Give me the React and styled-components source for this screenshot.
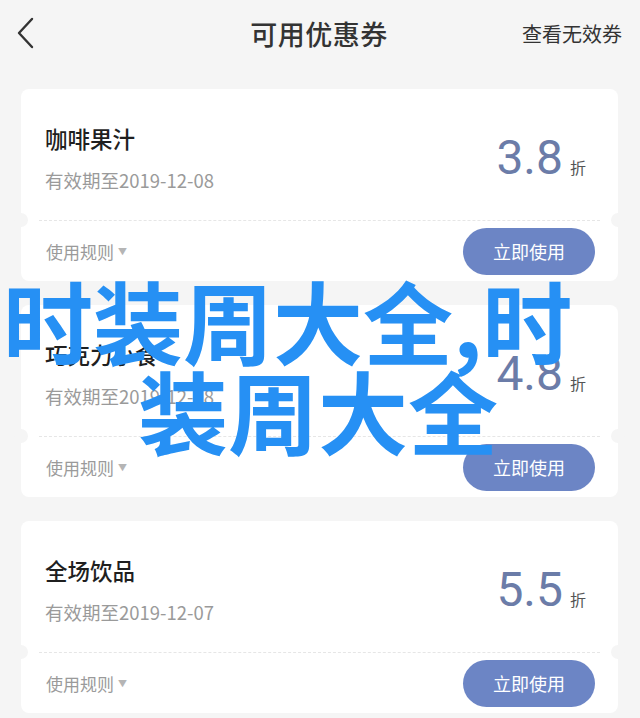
import React from 'react';
import styled, { createGlobalStyle } from 'styled-components';

const coupons = [
  { title: '咖啡果汁', date: '2019-12-08', rate: '3.8' },
  { title: '巧克力小食', date: '2019-12-08', rate: '4.8' },
  { title: '全场饮品', date: '2019-12-07', rate: '5.5' },
];

export default function App() {
  return (
    <Page>
      <GlobalStyle />
      <Header>
        <BackButton aria-label="返回">
          <svg width="20" height="32" viewBox="0 0 20 32">
            <path d="M16 2 L3 16 L16 30" fill="none" stroke="#333" strokeWidth="2.4" strokeLinecap="round" strokeLinejoin="round" />
          </svg>
        </BackButton>
        <Title>可用优惠券</Title>
        <HeaderLink>查看无效券</HeaderLink>
      </Header>

      <List>
        {coupons.map((c) => (
          <Card key={c.title}>
            <CardTop>
              <div>
                <CouponName>{c.title}</CouponName>
                <Expire>有效期至{c.date}</Expire>
              </div>
              <Discount>
                <Rate>{c.rate}</Rate>
                <Unit>折</Unit>
              </Discount>
            </CardTop>
            <Divider />
            <CardBottom>
              <Rules>
                使用规则 <Caret>▼</Caret>
              </Rules>
              <UseButton>立即使用</UseButton>
            </CardBottom>
          </Card>
        ))}
      </List>

      <Watermark>
        <span>时装周大全,时</span>
        <WatermarkLine>装周大全</WatermarkLine>
      </Watermark>
    </Page>
  );
}

const GlobalStyle = createGlobalStyle`
  html, body {
    margin: 0;
    padding: 0;
    background: #f5f5f5;
  }
  body {
    font-family: "Noto Sans CJK SC", "Noto Sans", sans-serif;
  }
`;

const Page = styled.div`
  position: relative;
  width: 640px;
  height: 718px;
  overflow: hidden;
  background: #f5f5f5;
`;

const Header = styled.div`
  height: 66px;
  display: grid;
  grid-template-columns: 1fr auto 1fr;
  align-items: center;
  padding: 0 18px 0 16px;
  box-sizing: border-box;
`;

const BackButton = styled.div`
  display: flex;
  align-items: center;
  height: 32px;
`;

const Title = styled.div`
  font-size: 27px;
  font-weight: 500;
  color: #333;
  letter-spacing: 0.5px;
`;

const HeaderLink = styled.div`
  justify-self: end;
  font-size: 20px;
  color: #333;
`;

const List = styled.div`
  display: flex;
  flex-direction: column;
  gap: 24px;
  padding: 23px 22px 0 21px;
`;

const Card = styled.div`
  position: relative;
  background: #fff;
  border-radius: 8px;
`;

const CardTop = styled.div`
  display: flex;
  justify-content: space-between;
  align-items: center;
  padding: 34px 32px 28px 24px;
`;

const CouponName = styled.div`
  font-size: 22.5px;
  line-height: 30px;
  font-weight: 500;
  color: #1f1f1f;
`;

const Expire = styled.div`
  margin-top: 15px;
  font-size: 18.5px;
  line-height: 24px;
  color: #9a9a9a;
`;

const Discount = styled.div`
  display: flex;
  align-items: baseline;
`;

const Rate = styled.span`
  font-family: Roboto, "Liberation Sans", sans-serif;
  font-size: 48px;
  line-height: 1;
  color: #6b7ca8;
`;

const Unit = styled.span`
  margin-left: 7px;
  font-size: 16px;
  color: #555;
`;

const Divider = styled.div`
  position: relative;
  margin: 0 18px;
  border-top: 1.5px dashed #e6e6e6;

  &::before,
  &::after {
    content: '';
    position: absolute;
    top: -8px;
    width: 14px;
    height: 14px;
    border-radius: 50%;
    background: #f5f5f5;
  }
  &::before {
    left: -25px;
  }
  &::after {
    right: -25px;
  }
`;

const CardBottom = styled.div`
  height: 60px;
  display: flex;
  justify-content: space-between;
  align-items: center;
  padding: 0 23px 0 25px;
`;

const Rules = styled.div`
  font-size: 17px;
  color: #9a9a9a;
  display: flex;
  align-items: center;
  gap: 4px;
`;

const Caret = styled.span`
  font-size: 9px;
  color: #b5b5b5;
`;

const UseButton = styled.div`
  width: 132px;
  height: 47px;
  border-radius: 24px;
  background: #6c85c5;
  color: #fff;
  font-size: 18px;
  display: flex;
  align-items: center;
  justify-content: center;
`;

const Watermark = styled.div`
  position: absolute;
  top: 274px;
  left: 3px;
  display: flex;
  flex-direction: column;
  font-family: "Noto Sans CJK SC", sans-serif;
  font-size: 90px;
  line-height: 90px;
  font-weight: 700;
  color: #2690f4;
  white-space: nowrap;
  pointer-events: none;
`;

const WatermarkLine = styled.span`
  margin-left: 135px;
`;
